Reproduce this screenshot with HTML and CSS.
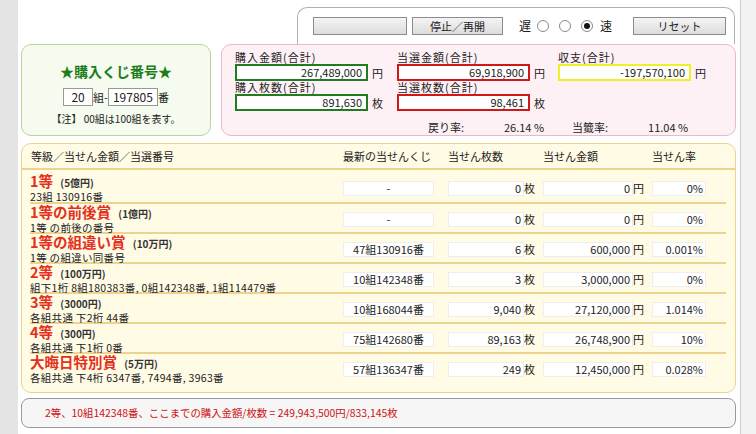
FILE: index.html
```html
<!DOCTYPE html>
<html lang="ja">
<head>
   <meta charset="UTF-8">
   <title>年末ジャンボ シミュレーター</title>
   <link rel="stylesheet" href="styles.css">
</head>
<body>
   <div class="page">
      <div class="controls">
         <button class="btn wide" type="button"></button>
         <button class="btn" type="button">停止／再開</button>
         <span class="speed-label">遅</span>
         <span class="radio"></span>
         <span class="radio"></span>
         <span class="radio checked"></span>
         <span class="speed-label">速</span>
         <button class="btn reset" type="button">リセット</button>
      </div>

      <div class="top-row">
         <div class="ticket-box">
            <h2 class="ticket-title">★購入くじ番号★</h2>
            <div class="ticket-inputs">
               <span class="field group">20</span>組-<span class="field number">197805</span>番
            </div>
            <p class="ticket-note">【注】 00組は100組を表す。</p>
         </div>

         <div class="summary-box">
            <div class="summary-grid">
               <div class="stat">
                  <div class="stat-label">購入金額(合計)</div>
                  <div class="stat-line"><span class="stat-value green">267,489,000</span>円</div>
               </div>
               <div class="stat">
                  <div class="stat-label">当選金額(合計)</div>
                  <div class="stat-line"><span class="stat-value red">69,918,900</span>円</div>
               </div>
               <div class="stat">
                  <div class="stat-label">収支(合計)</div>
                  <div class="stat-line"><span class="stat-value yellow">-197,570,100</span>円</div>
               </div>
               <div class="stat">
                  <div class="stat-label">購入枚数(合計)</div>
                  <div class="stat-line"><span class="stat-value green">891,630</span>枚</div>
               </div>
               <div class="stat">
                  <div class="stat-label">当選枚数(合計)</div>
                  <div class="stat-line"><span class="stat-value red">98,461</span>枚</div>
               </div>
            </div>
            <div class="rates">
               <span class="rate-label">戻り率:</span><span class="rate-value">26.14 %</span>
               <span class="rate-label second">当籤率:</span><span class="rate-value">11.04 %</span>
            </div>
         </div>
      </div>

      <div class="results">
         <div class="results-head">
            <span>等級／当せん金額／当選番号</span>
            <span>最新の当せんくじ</span>
            <span>当せん枚数</span>
            <span>当せん金額</span>
            <span>当せん率</span>
         </div>
         <div class="results-body">
            <div class="prize-row">
               <div class="prize-name"><div class="prize-title">1等 <small>(5億円)</small></div><div class="prize-sub">23組 130916番</div></div>
               <div class="cell"><span class="box latest">-</span></div>
               <div class="cell"><span class="box count">0</span>枚</div>
               <div class="cell"><span class="box amount">0</span>円</div>
               <div class="cell"><span class="box rate">0%</span></div>
            </div>
            <div class="prize-row">
               <div class="prize-name"><div class="prize-title">1等の前後賞 <small>(1億円)</small></div><div class="prize-sub">1等 の前後の番号</div></div>
               <div class="cell"><span class="box latest">-</span></div>
               <div class="cell"><span class="box count">0</span>枚</div>
               <div class="cell"><span class="box amount">0</span>円</div>
               <div class="cell"><span class="box rate">0%</span></div>
            </div>
            <div class="prize-row">
               <div class="prize-name"><div class="prize-title">1等の組違い賞 <small>(10万円)</small></div><div class="prize-sub">1等 の組違い同番号</div></div>
               <div class="cell"><span class="box latest">47組130916番</span></div>
               <div class="cell"><span class="box count">6</span>枚</div>
               <div class="cell"><span class="box amount">600,000</span>円</div>
               <div class="cell"><span class="box rate">0.001%</span></div>
            </div>
            <div class="prize-row">
               <div class="prize-name"><div class="prize-title">2等 <small>(100万円)</small></div><div class="prize-sub">組下1桁 8組180383番, 0組142348番, 1組114479番</div></div>
               <div class="cell"><span class="box latest">10組142348番</span></div>
               <div class="cell"><span class="box count">3</span>枚</div>
               <div class="cell"><span class="box amount">3,000,000</span>円</div>
               <div class="cell"><span class="box rate">0%</span></div>
            </div>
            <div class="prize-row">
               <div class="prize-name"><div class="prize-title">3等 <small>(3000円)</small></div><div class="prize-sub">各組共通 下2桁 44番</div></div>
               <div class="cell"><span class="box latest">10組168044番</span></div>
               <div class="cell"><span class="box count">9,040</span>枚</div>
               <div class="cell"><span class="box amount">27,120,000</span>円</div>
               <div class="cell"><span class="box rate">1.014%</span></div>
            </div>
            <div class="prize-row">
               <div class="prize-name"><div class="prize-title">4等 <small>(300円)</small></div><div class="prize-sub">各組共通 下1桁 0番</div></div>
               <div class="cell"><span class="box latest">75組142680番</span></div>
               <div class="cell"><span class="box count">89,163</span>枚</div>
               <div class="cell"><span class="box amount">26,748,900</span>円</div>
               <div class="cell"><span class="box rate">10%</span></div>
            </div>
            <div class="prize-row last">
               <div class="prize-name"><div class="prize-title">大晦日特別賞 <small>(5万円)</small></div><div class="prize-sub">各組共通 下4桁 6347番, 7494番, 3963番</div></div>
               <div class="cell"><span class="box latest">57組136347番</span></div>
               <div class="cell"><span class="box count">249</span>枚</div>
               <div class="cell"><span class="box amount">12,450,000</span>円</div>
               <div class="cell"><span class="box rate">0.028%</span></div>
            </div>
         </div>
      </div>

      <div class="message">2等、10組142348番、ここまでの購入金額/枚数 = 249,943,500円/833,145枚</div>
   </div>
</body>
</html>
```

FILE: styles.css
```css
* {
   box-sizing: border-box;
}

body {
   margin: 0;
   background: linear-gradient(90deg, #e4e4e4, #f2f2f2);
   font-family: "Noto Sans CJK JP", "Noto Sans", sans-serif;
   font-size: 11px;
   color: #222;
}

.page {
   margin-left: 18px;
   width: 723px;
   min-height: 434px;
   padding: 7px 4px 0 3px;
   background: #fff;
   border-right: 1px solid #cfcfcf;
}

/* top controls */
.controls {
   display: flex;
   align-items: flex-start;
   margin-left: 276px;
   width: 438px;
   height: 37px;
   padding: 9px 0 0 15px;
   border: 1px solid #b0b0b0;
   border-bottom: none;
   border-radius: 10px 10px 0 0;
}

.btn {
   width: 91px;
   height: 18px;
   margin-right: 5px;
   padding: 0;
   font-family: inherit;
   font-size: 11px;
   line-height: 16px;
   color: #222;
   background: linear-gradient(#f4f4f4, #dcdcdc);
   border: 1px solid #8c8c8c;
}

.btn.wide {
   width: 94px;
}

.btn.reset {
   width: 93px;
   margin-left: 17px;
}

.speed-label {
   line-height: 18px;
   margin: 0 4px 0 11px;
   font-size: 12px;
}

.speed-label + .radio {
   margin-left: 2px;
}

.radio {
   width: 12px;
   height: 12px;
   margin: 3px 5px 0 5px;
   border: 1px solid #8a8a8a;
   border-radius: 50%;
   background: #fff;
   position: relative;
}

.radio.checked::after {
   content: "";
   position: absolute;
   left: 2px;
   top: 2px;
   width: 6px;
   height: 6px;
   border-radius: 50%;
   background: #111;
}

.radio.checked + .speed-label {
   margin-left: 2px;
}

/* top panels */
.top-row {
   display: flex;
   gap: 10px;
   height: 92px;
}

.ticket-box {
   width: 190px;
   border: 1px solid #b9d69a;
   border-radius: 10px;
   background: #f5fbee;
   text-align: center;
}

.ticket-title {
   margin: 17px 0 8px;
   font-size: 14px;
   line-height: 18px;
   color: #1c7d1c;
}

.ticket-inputs {
   display: flex;
   justify-content: center;
   align-items: center;
   font-size: 11px;
}

.field {
   height: 18px;
   padding: 0 3px;
   line-height: 16px;
   font-size: 12px;
   background: #fff;
   border: 1px solid #999;
   text-align: center;
}

.field.group {
   width: 30px;
}

.field.number {
   width: 50px;
}

.ticket-note {
   margin: 5px 0 0;
   font-size: 10px;
}

.summary-box {
   flex: 1;
   padding: 6px 0 0 13px;
   border: 1px solid #e7b9cd;
   border-radius: 10px;
   background: #fdf1f6;
}

.summary-grid {
   display: grid;
   grid-template-columns: 162px 161px 170px;
}

.stat-label {
   font-size: 11px;
   line-height: 13px;
   letter-spacing: 1px;
}

.stat-line {
   display: flex;
   align-items: center;
   height: 17px;
   font-size: 11px;
}

.stat-value {
   width: 133px;
   height: 17px;
   margin-right: 4px;
   padding-right: 4px;
   line-height: 13px;
   text-align: right;
   background: #fff;
   border: 2px solid;
}

.stat-value.green {
   border-color: #217c21;
}

.stat-value.red {
   border-color: #d01818;
}

.stat-value.yellow {
   border-color: #f0f028;
}

.rates {
   display: flex;
   margin: 8px 0 0 193px;
   font-size: 11px;
}

.rate-value {
   width: 80px;
   text-align: right;
}

.rate-label.second {
   margin-left: 28px;
}

/* results */
.results {
   margin-top: 7px;
   height: 250px;
   border: 1px solid #ecd38e;
   border-radius: 10px;
   background: #fffbe5;
   overflow: hidden;
}

.results-head {
   display: grid;
   grid-template-columns: 312px 105px 95px 109px 70px;
   height: 26px;
   padding-left: 9px;
   line-height: 24px;
   font-size: 11px;
   border-bottom: 2px solid #ecd38e;
}

.results-body {
   padding: 1px 9px 0 8px;
}

.prize-row {
   display: grid;
   grid-template-columns: 313px 105px 95px 109px 70px;
   align-items: center;
   height: 30px;
   border-bottom: 2px solid #ecd38e;
}

.prize-row:first-child {
   height: 33px;
   padding-top: 2px;
}

.prize-row.last {
   border-bottom: none;
}

.prize-name {
   line-height: 12px;
}

.prize-title {
   font-size: 14.5px;
   line-height: 16px;
   font-weight: bold;
   color: #e4301c;
}

.prize-title small {
   margin-left: 4px;
   font-size: 10px;
   color: #333;
}

.prize-sub {
   font-size: 10.5px;
   line-height: 12px;
   letter-spacing: 0.3px;
}

.cell {
   display: flex;
   align-items: center;
   font-size: 11px;
}

.box {
   height: 15px;
   padding-right: 2px;
   line-height: 13px;
   text-align: right;
   background: #fff;
   border: 1px solid #eee;
}

.box.latest {
   width: 91px;
   padding: 0;
   text-align: center;
}

.box.count {
   width: 76px;
}

.box.amount {
   width: 90px;
}

.box.rate {
   width: 54px;
}

.message {
   margin-top: 5px;
   height: 30px;
   padding-left: 23px;
   line-height: 28px;
   font-size: 10.4px;
   color: #cc1111;
   background: #f6f6f6;
   border: 1px solid #999;
   border-radius: 8px;
}
```
